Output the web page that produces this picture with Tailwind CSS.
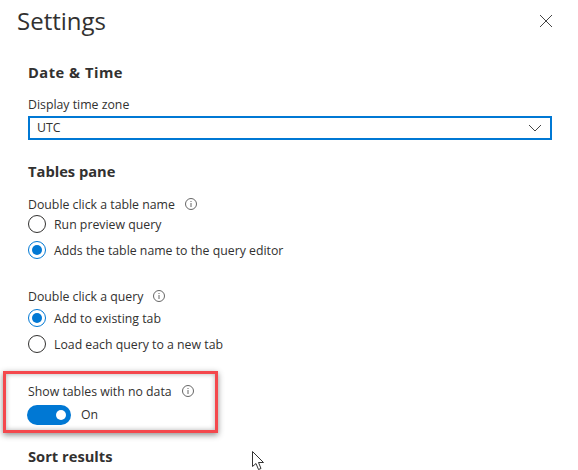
<!DOCTYPE html>
<html lang="en">
<head>
    <meta charset="UTF-8">
    <title>Settings</title>
    <script src="https://cdn.jsdelivr.net/npm/@tailwindcss/browser@4"></script>
</head>
<body class="bg-white overflow-hidden font-['Open_Sans',sans-serif] text-[#323130]">
<div class="relative w-[578px] h-[470px] overflow-hidden">

    <!-- header -->
    <div class="flex items-center justify-between pl-[17px] pr-[26px] h-[42px]">
        <h1 class="text-[24px] leading-[42px] text-[#323130]">Settings</h1>
        <svg class="w-3 h-3" viewBox="0 0 12 12" fill="none" stroke="#444" stroke-width="1"><path d="M0 0L12 12M12 0L0 12"/></svg>
    </div>

    <div class="pl-[28px] pr-[26px]">
        <!-- date and time -->
        <h2 class="mt-[20px] text-[14.7px] font-bold leading-5 tracking-[0.5px]">Date &amp; Time</h2>
        <p class="mt-[14px] text-[12.3px] leading-[18px]">Display time zone</p>
        <div class="mt-[2px] h-6 border-2 border-[#0078d4] flex items-center justify-between pl-[7px] pr-[8px] text-[12.3px]">
            <span>UTC</span>
            <svg class="w-[14px] h-2" viewBox="0 0 14 8" fill="none" stroke="#444" stroke-width="1"><path d="M1 1L7 7L13 1"/></svg>
        </div>

        <!-- tables pane -->
        <h2 class="mt-[21px] text-[14.7px] font-bold leading-5">Tables pane</h2>
        <div class="mt-[14px] h-[18px] flex items-center text-[12.3px] leading-[18px]">
            <span class="pt-[2px]">Double click a table name</span>
            <svg class="ml-[10px] w-3 h-3" viewBox="0 0 12 12" fill="none" stroke="#666"><circle cx="6" cy="6" r="5.5"/><path d="M6 5V9M6 3V4"/></svg>
        </div>
        <div class="flex items-center gap-[8px] h-[26px] mt-[-2px] text-[12.3px]">
            <span class="w-[18px] h-[18px] rounded-full border border-[#323130]"></span>
            <span class="pt-[2px]">Run preview query</span>
        </div>
        <div class="flex items-center gap-[8px] h-[26px] text-[12.3px]">
            <span class="w-[18px] h-[18px] rounded-full border border-[#0078d4] flex items-center justify-center">
                <span class="w-[10px] h-[10px] rounded-full bg-[#0078d4]"></span>
            </span>
            <span class="pt-[2px]">Adds the table name to the query editor</span>
        </div>

        <div class="mt-[24px] h-[18px] flex items-center text-[12.3px] leading-[18px]">
            <span class="pt-[2px]">Double click a query</span>
            <svg class="ml-[10px] w-3 h-3" viewBox="0 0 12 12" fill="none" stroke="#666"><circle cx="6" cy="6" r="5.5"/><path d="M6 5V9M6 3V4"/></svg>
        </div>
        <div class="flex items-center gap-[8px] h-[26px] text-[12.3px]">
            <span class="w-[18px] h-[18px] rounded-full border border-[#0078d4] flex items-center justify-center">
                <span class="w-[10px] h-[10px] rounded-full bg-[#0078d4]"></span>
            </span>
            <span class="pt-[2px]">Add to existing tab</span>
        </div>
        <div class="flex items-center gap-[8px] h-[26px] text-[12.3px]">
            <span class="w-[18px] h-[18px] rounded-full border border-[#323130]"></span>
            <span class="pt-[2px]">Load each query to a new tab</span>
        </div>

        <!-- show tables toggle -->
        <div class="mt-[25px] h-[18px] flex items-center text-[12.3px] leading-[18px]">
            <span class="pt-[2px]">Show tables with no data</span>
            <svg class="ml-[10px] w-3 h-3" viewBox="0 0 12 12" fill="none" stroke="#666"><circle cx="6" cy="6" r="5.5"/><path d="M6 5V9M6 3V4"/></svg>
        </div>
        <div class="mt-[5px] ml-[-1px] flex items-center gap-[10px] text-[12.3px]">
            <span class="w-[44px] h-5 rounded-full bg-[#0078d4] flex items-center justify-end pr-[5px]">
                <span class="w-[10px] h-[10px] rounded-full bg-white"></span>
            </span>
            <span>On</span>
        </div>

        <h2 class="mt-[21px] text-[14.7px] font-bold leading-5">Sort results</h2>
    </div>

    <!-- red highlight drawn over the screenshot -->
    <div class="absolute left-[3px] top-[371px] w-[215px] h-[62px] border-[3px] border-[#f4484d] shadow-[0_2px_6px_rgba(0,0,0,0.45),inset_0_0_5px_rgba(0,0,0,0.3)]"></div>

    <!-- mouse cursor -->
    <svg class="absolute left-[252px] top-[451px] w-[13px] h-[20px]" viewBox="0 0 13 20" fill="#fff" stroke="#333" stroke-width="1"><path d="M0.5 0.5V15.5L4 12.5L6.5 18.5L9 17.5L6.5 11.5H11.5Z"/></svg>
</div>
</body>
</html>
